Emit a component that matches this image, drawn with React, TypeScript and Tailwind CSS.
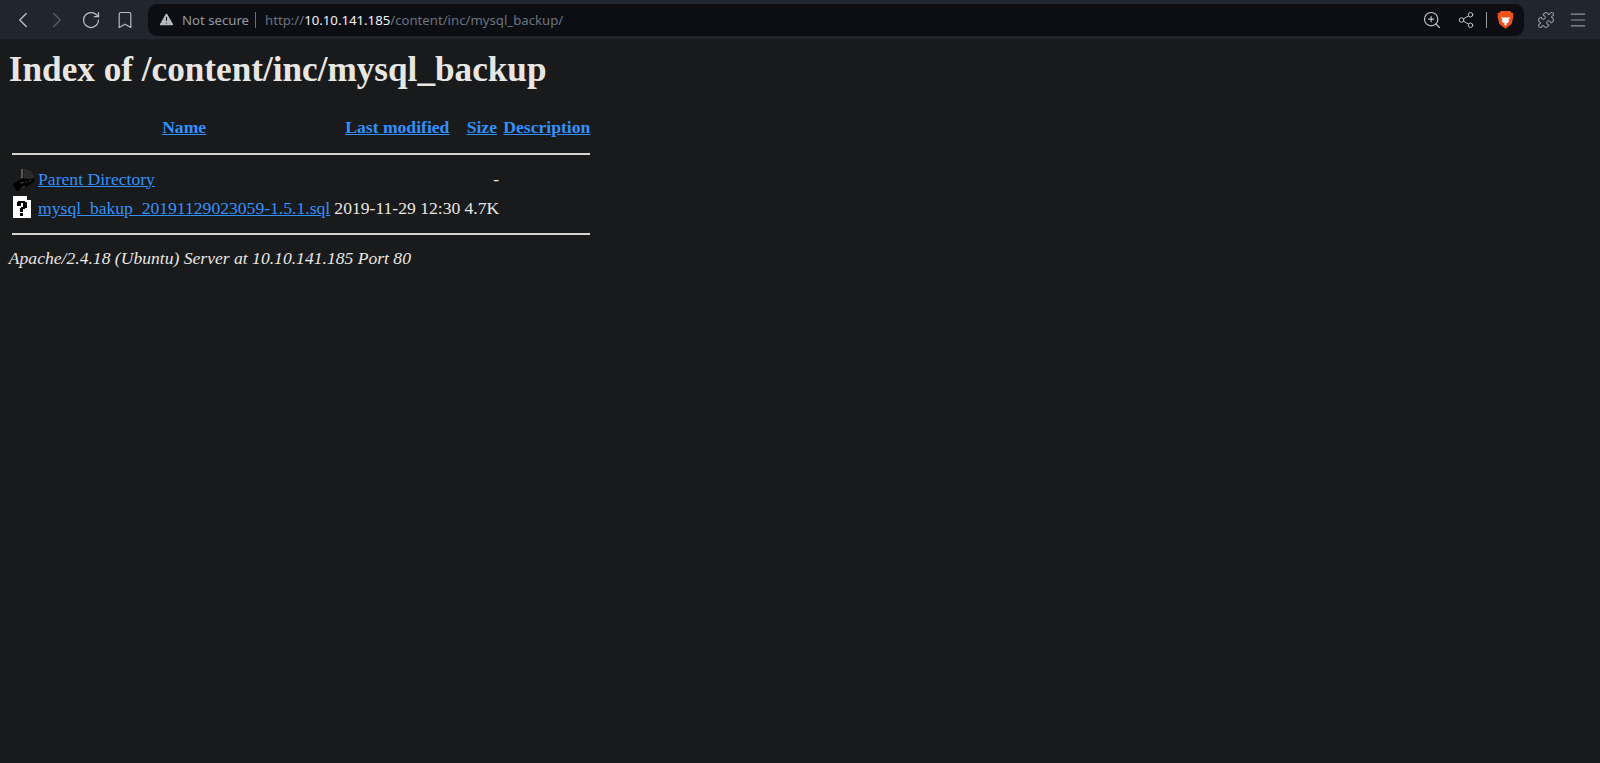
import React from "react";
import { ChevronLeft, ChevronRight, RotateCw, Bookmark, ZoomIn, Share2, Puzzle, Menu, TriangleAlert } from "lucide-react";

function Brave() {
  return (
    <svg width="17" height="20" viewBox="0 0 17 20" className="ml-[10px]">
      <path d="M4 1h9l1.6 1.8L16.5 3 16 5l.5 1.5-1.9 7.5-4.4 3.6-1.7 1.2-1.7-1.2-4.4-3.6L.5 6.5 1 5 .5 3l1.9-.2z" fill="#f1511b" />
      <path d="M4 7l3 .8 1.5-.8 1.5.8 3-.8-1.6 3.2 1 1.3-2.9 2.1-1 1.7-1-1.7-2.9-2.1 1-1.3z" fill="#fff" />
      <path d="M7 14.6l1.5-.7 1.5.7-1.5 1.2z" fill="#fff" />
    </svg>
  );
}

function ParentIcon() {
  return (
    <svg width="24" height="24" viewBox="0 0 24 24" className="block overflow-visible">
      <path d="M9 2h5l5 2 3 4 .5 7-8.5 5-6 1-1 3H5l-4-6v-1l5-3 3-2z" fill="#000" />
      <path d="M9 2h2v9l-2 1z" fill="#555" />
      <path d="M11 2h3l5 2 3 4 .5 3-5 1-6-.5z" fill="#2a2a2a" />
      <path d="M8 16l3-1 1 .6-3 1zM13 15l2-.6.6.6-2 .6zM17 13.8l2-.6.6.6-2 .6zM10 20l3-1v.8l-3 1z" fill="#666" />
    </svg>
  );
}

function UnknownIcon() {
  return (
    <svg width="22" height="24" viewBox="0 0 22 24" shapeRendering="crispEdges" className="block">
      <path d="M1 1h14l4 4v18H1z" fill="#fff" />
      <path d="M15 1v4h4" fill="#181a1b" />
      <path d="M6 6h7v1h2v6h-2v1h-2v3H8v-4h1v-1h2V8H9v3H5V7h1zM8 18h3v3H8z" fill="#000" />
    </svg>
  );
}

export default function App() {
  const link = "text-[#3391ff] underline";
  return (
    <div className="min-h-[763px] bg-[#181a1b] text-[#e8e6e3] font-['Liberation_Serif',serif] text-[17.6px] leading-[20px]">
      <div className="h-[40px] bg-[#21252e] flex items-center border-b border-[#1a1c20] text-[#b9bec7]">
        <ChevronLeft size={26} strokeWidth={1.3} className="ml-[10px]" />
        <ChevronRight size={26} strokeWidth={1.3} className="ml-[8px] text-[#555b66]" />
        <RotateCw size={20} strokeWidth={1.5} className="ml-[11px]" />
        <Bookmark size={20} strokeWidth={1.4} className="ml-[14px]" />
        <div className="ml-[13px] w-[1376px] h-[32px] rounded-[9px] bg-[#0c0e13] flex items-center font-['Noto_Sans',sans-serif] text-[13.2px]">
          <TriangleAlert size={17} fill="#b4b8bf" stroke="#0c0e13" strokeWidth={1.5} className="ml-[10px]" />
          <span className="ml-[7px] text-[#9298a3]">Not secure</span>
          <span className="ml-[6px] h-[16px] w-px bg-[#6a6f78]" />
          <span className="ml-[9px] text-[#6a7480]">http://</span>
          <span className="text-[#f1f3f5]">10.10.141.185</span>
          <span className="text-[#6a7480]">/content/inc/mysql_backup/</span>
          <div className="ml-auto flex items-center pr-[10px] text-[#c3c7ce]">
            <ZoomIn size={20} strokeWidth={1.4} />
            <Share2 size={18} strokeWidth={1.3} className="ml-[15px]" />
            <span className="ml-[11px] h-[16px] w-px bg-[#9aa0a9]" />
            <Brave />
          </div>
        </div>
        <Puzzle size={18} strokeWidth={1.5} className="ml-[13px] text-[#8f97a3]" />
        <Menu size={20} strokeWidth={1.4} className="ml-[13px] text-[#8f97a3]" />
      </div>
      <div className="px-[8.8px] pt-[0.1px]">
        <h1 className="text-[35.2px] font-bold mt-[10px] mb-[24px] leading-[40px]">Index of /content/inc/mysql_backup</h1>
        <table className="border-separate border-spacing-[2.2px]">
          <tbody>
            <tr>
              <th className="p-[1.1px]"></th>
              <th className="p-[1.1px]"><a className={link}>Name</a></th>
              <th className="p-[1.1px]"><a className={link}>Last modified</a></th>
              <th className="p-[1.1px]"><a className={link}>Size</a></th>
              <th className="p-[1.1px]"><a className={link}>Description</a></th>
            </tr>
            <tr>
              <th colSpan={5} className="p-[1.1px]"><hr className="border-t-2 border-[#d8d5d0] mt-[12px] mb-[7px]" /></th>
            </tr>
            <tr>
              <td className="p-[1.1px] align-top"><div className="w-[22px]"><ParentIcon /></div></td>
              <td className="p-[1.1px] align-middle"><a className={link}>Parent Directory</a></td>
              <td className="p-[1.1px]"></td>
              <td className="p-[1.1px] text-right">-</td>
              <td className="p-[1.1px]"></td>
            </tr>
            <tr>
              <td className="p-[1.1px] align-top"><UnknownIcon /></td>
              <td className="px-[1.1px] pt-[3px] pb-[1.1px] align-middle"><a className={link}>mysql_bakup_20191129023059-1.5.1.sql</a></td>
              <td className="px-[1.1px] pt-[3px] pb-[1.1px]">2019-11-29 12:30</td>
              <td className="px-[1.1px] pt-[3px] pb-[1.1px] text-right">4.7K</td>
              <td className="p-[1.1px]"></td>
            </tr>
            <tr>
              <th colSpan={5} className="p-[1.1px]"><hr className="border-t-2 border-[#d8d5d0] mt-[10px] mb-[10px]" /></th>
            </tr>
          </tbody>
        </table>
        <address className="italic">Apache/2.4.18 (Ubuntu) Server at 10.10.141.185 Port 80</address>
      </div>
    </div>
  );
}
